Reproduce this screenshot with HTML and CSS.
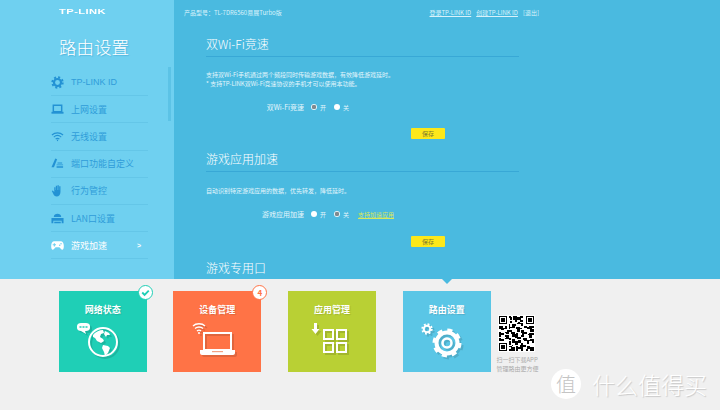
FILE: index.html
```html
<!DOCTYPE html>
<html lang="zh-CN">
<head>
    <meta charset="UTF-8">
    <title>路由设置</title>
    <link rel="stylesheet" href="styles.css">
</head>
<body>
<svg class="defs" width="0" height="0">
    <symbol id="gear" viewBox="0 0 24 24">
        <circle cx="12" cy="12" r="6.5" fill="none" stroke="currentColor" stroke-width="4"/>
        <circle cx="12" cy="12" r="9.6" fill="none" stroke="currentColor" stroke-width="3.6" stroke-dasharray="3.77 3.77"/>
    </symbol>
</svg>
<div id="top">
    <div id="side">
        <div class="logo">TP-LINK</div>
        <h1>路由设置</h1>
        <ul class="menu">
            <li>
                <svg viewBox="0 0 14 14"><use href="#gear"/></svg>
                <span class="latin">TP-LINK ID</span>
            </li>
            <li>
                <svg viewBox="0 0 14 14"><path d="M2.500 2.500h9v7h-9z" fill="none" stroke="currentColor" stroke-width="1.600"/><path d="M.500 9.500h13v2H.500z" fill="currentColor"/></svg>
                <span>上网设置</span>
            </li>
            <li>
                <svg viewBox="0 0 14 14" fill="none" stroke="currentColor" stroke-width="1.200"><path d="M1 5.400c3.400-3 8.600-3 12 0"/><path d="M3 7.600c2.300-2 5.700-2 8 0"/><path d="M5 9.700c1.200-.9 2.800-.9 4 0"/><path d="M6.400 11.200h1.200" stroke-width="1.500"/></svg>
                <span>无线设置</span>
            </li>
            <li>
                <svg viewBox="0 0 14 14" fill="currentColor"><path d="M4.600 1.500l2 1-3.400 8.500H.500z"/><path d="M6 8h7v1H6zM6 10h7v1.500H6zM7 6h5v1H7z"/></svg>
                <span>端口功能自定义</span>
            </li>
            <li>
                <svg viewBox="0 0 14 14" fill="currentColor"><path d="M3.500 3.500h1.300v3h.4V1.800h1.400v4.700h.4V1.300h1.400v5.200h.4V2.300h1.400v6.400c0 3-1.700 4.800-4 4.800-2 0-3-1.200-3.800-3L.900 7.500l1-.6 1.600 1.700z"/></svg>
                <span>行为管控</span>
            </li>
            <li>
                <svg viewBox="0 0 14 14" fill="currentColor"><path d="M3 5.500C3 3 5 2 7 2s4 1 4 3.500zM.500 6.500h13V12h-2V9.500h-9V12h-2zM3.500 10.500h7V12h-7z"/></svg>
                <span>LAN口设置</span>
            </li>
            <li class="active">
                <svg viewBox="0 0 14 14" fill="currentColor"><path d="M3.500 2.500h7c2 0 3.300 2 3.300 5 0 2.300-.5 4-1.800 4-1.500 0-2-2.500-3.500-2.500h-3c-1.500 0-2 2.500-3.500 2.500C.700 11.500.200 9.800.200 7.500c0-3 1.300-5 3.300-5z"/><path d="M3 4.500h1.200v1.200h1.200v1.100H4.200V8H3V6.800H1.800V5.700H3z" fill="#6fd0f0"/><circle cx="10.800" cy="5" r=".8" fill="#6fd0f0"/><circle cx="9.400" cy="6.800" r=".8" fill="#6fd0f0"/></svg>
                <span>游戏加速</span>
                <b class="arrow">&gt;</b>
            </li>
        </ul>
        <div class="scroll"></div>
    </div>
    <div id="main">
        <div class="head">
            <span>产品型号：TL-7DR6560易展Turbo版</span>
            <span class="links"><a>登录TP-LINK ID</a><a>创建TP-LINK ID</a><a class="plain">[退出]</a></span>
        </div>
        <h2>双Wi-Fi竞速</h2>
        <p class="desc">支持双Wi-Fi手机通过两个频段同时传输游戏数据，有效降低游戏延时。<br>* 支持TP-LINK双Wi-Fi竞速协议的手机才可以使用本功能。</p>
        <div class="row">
            <label>双Wi-Fi竞速</label>
            <i class="radio on"></i><span>开</span>
            <i class="radio"></i><span>关</span>
        </div>
        <div class="save"><button>保存</button></div>
        <h2>游戏应用加速</h2>
        <p class="desc one">自动识别特定游戏应用的数据，优先转发，降低延时。</p>
        <div class="row">
            <label>游戏应用加速</label>
            <i class="radio"></i><span>开</span>
            <i class="radio on"></i><span>关</span>
            <a class="yellow">支持加速应用</a>
        </div>
        <div class="save two"><button>保存</button></div>
        <h2 class="last">游戏专用口</h2>
    </div>
</div>
<div id="bottom">
    <div class="pointer"></div>
    <div class="tile green">
        <div class="name">网络状态</div>
        <svg class="art" viewBox="0 0 88 56">
            <circle cx="44" cy="26" r="14" fill="none" stroke="#fff" stroke-width="2"/>
            <path d="M34 19c2-3 6-5 10-5l1 3-3 1-1 3 3 2 1 2-3 2-4-2-2-3-2-1zM44 29l5 1 2 2-2 5-3 3-1-4-2-4zM46 15l4 2 1 2-3 0-1 2-2-3z" fill="#fff"/>
            <path d="M18 10c0-2 2-3 4-3h5c2 0 4 1 4 3v2c0 2-2 3-4 3h-1l1 3-5-3c-2 0-4-1-4-3z" fill="#fff"/>
            <path d="M20.500 11h2M23.500 11h2M26.500 11h2" stroke="#1fcfb6" stroke-width="1.600"/>
        </svg>
        <div class="badge teal"><svg viewBox="0 0 14 14"><path d="M3.500 7l2.500 2.500L10.500 5" fill="none" stroke="#1fcfb6" stroke-width="2"/></svg></div>
    </div>
    <div class="tile orange">
        <div class="name">设备管理</div>
        <svg class="art" viewBox="0 0 88 56">
            <path d="M31 17h27v17H31z" fill="none" stroke="#fff" stroke-width="2"/>
            <path d="M27 34h35v3c0 1-1 2-2 2H29c-1 0-2-1-2-2z" fill="#fff"/>
            <path d="M39 35h11v1.200H39z" fill="#f3a284"/>
            <g fill="none" stroke="#fff" stroke-width="1.300"><path d="M20 10c3-3 9-3 12 0"/><path d="M22 12.500c2-2 6-2 8 0"/><path d="M24 15c1-1 3-1 4 0"/></g>
            <circle cx="26" cy="17" r="1" fill="#fff"/>
        </svg>
        <div class="badge red">4</div>
    </div>
    <div class="tile lime">
        <div class="name">应用管理</div>
        <svg class="art" viewBox="0 0 88 56">
            <path d="M26 7h3v6h2.500l-4 5-4-5H26z" fill="#fff"/>
            <g fill="none" stroke="#fff" stroke-width="2"><path d="M36 14h9v9h-9zM49 14h9v9h-9zM36 27h9v9h-9zM49 27h9v9h-9z"/></g>
        </svg>
    </div>
    <div class="tile blue">
        <div class="name">路由设置</div>
        <svg class="art" viewBox="0 0 88 56" color="#fff">
            <use href="#gear" x="18" y="7" width="12" height="12"/>
            <g fill="none" stroke="#fff">
                <circle cx="44" cy="27" r="10.500" stroke-width="4"/>
                <circle cx="44" cy="27" r="13" stroke-width="3" stroke-dasharray="5.100 5.100"/>
                <circle cx="44" cy="27" r="4.500" stroke-width="2.500"/>
            </g>
        </svg>
    </div>
    <div class="app">
        <div class="qr">
            <svg viewBox="0 0 29 29" shape-rendering="crispEdges">
                <path d="M0 0h7v7H0zM1 1v5h5V1zM2 2h3v3H2zM22 0h7v7h-7zM23 1v5h5V1zM24 2h3v3h-3zM0 22h7v7H0zM1 23v5h5v-5zM2 24h3v3H2z" fill-rule="evenodd"/>
                <path d="M8 0h2v1h1v2H9V2H8zM12 0h3v1h2V0h3v2h-2v1h2v2h-3V3h-2v2h-2V3h-1V1zM9 4h2v2H9zM16 5h1v1h3v2h-2V7h-3V6h1zM8 7h1v2h2v1H9v1H8zM11 7h3v1h-1v2h-2zM21 8h2v1h2V8h4v2h-2v1h2v2h-3v-2h-3v-1h-2zM0 8h3v2h2V8h2v3H4v1H2v-1H0zM14 9h3v1h2v1h-2v2h-2v-2h-1zM7 12h4v1h2v2h-3v-2H8v2H6v-1H5v-1h2zM18 12h3v1h2v2h-2v2h-3v-1h1v-2h-1zM0 13h2v1h2v2H2v1H0zM25 14h4v2h-2v2h-2v-2h-1v-1h1zM11 15h3v-1h2v3h2v2h-3v-1h-2v-1h-2zM5 16h3v2h2v2H8v-1H5v-1h1v-1H5zM0 18h2v1h2v2H0zM20 18h3v2h3v-1h3v3h-2v-1h-2v2h-2v-2h-2v-1h-1zM11 19h2v2h3v-1h2v2h-2v2h-3v-2h-2zM8 21h2v3H8zM18 22h2v2h2v2h-2v3h-2v-2h-2v-1h1v-2h1zM8 25h3v1h2v3H8v-2h2v-1H8zM14 25h2v4h-2zM23 25h3v1h3v3h-3v-2h-2v2h-2v-2h1zM11 24h1v1h-1z"/>
            </svg>
        </div>
        <p>扫一扫下载APP<br>管理路由更方便</p>
    </div>
    <div class="mark">
        <span class="seal">值</span>
        <span>什么值得买</span>
    </div>
</div>
</body>
</html>
```

FILE: styles.css
```css
* {
    margin: 0;
    padding: 0;
    box-sizing: border-box;
}

html, body {
    width: 720px;
    height: 410px;
    overflow: hidden;
}

body {
    font-family: "Noto Sans CJK SC", "Liberation Sans", sans-serif;
    background: #f0f0f0;
}

.defs {
    position: absolute;
}

#top {
    display: flex;
    height: 279px;
    overflow: hidden;
}

/* left menu */
#side {
    width: 174px;
    background: #6fd0f0;
    padding: 6px 26px 0 51px;
    position: relative;
}

.logo {
    font-family: "Liberation Sans", sans-serif;
    font-size: 8px;
    font-weight: bold;
    line-height: 11px;
    color: #fff;
    padding-left: 8px;
    letter-spacing: .3px;
    transform: scaleX(1.4);
    transform-origin: 8px 0;
}

h1 {
    font-size: 17.5px;
    font-weight: 300;
    line-height: 26px;
    color: #fff;
    padding-left: 8px;
    margin-top: 17px;
    text-shadow: 1px 1px 1px rgba(40, 140, 190, .4);
}

.menu {
    list-style: none;
    margin-top: 9px;
}

.menu li {
    display: flex;
    align-items: center;
    height: 27.2px;
    border-bottom: 1px solid #64c6e8;
    font-size: 9px;
    color: #2f9dd9;
}

.menu svg {
    width: 13px;
    height: 13px;
    margin-right: 7px;
    color: #2392d4;
}

.menu .active {
    color: #fff;
    position: relative;
}

.menu .active svg {
    color: #fff;
}

.latin {
    font-family: "Liberation Sans", sans-serif;
}

.arrow {
    font-family: "Liberation Sans", sans-serif;
    font-size: 7px;
    margin-left: auto;
    margin-right: 7px;
}

.scroll {
    position: absolute;
    left: 168px;
    top: 67px;
    width: 3px;
    height: 54px;
    background: #5cc3e6;
}

/* right content */
#main {
    flex: 1;
    background: #4abae0;
    color: #e4f6fc;
    padding-right: 201px;
}

.head {
    display: flex;
    justify-content: space-between;
    height: 24px;
    margin-right: -20px;
    padding: 8px 0 0 10px;
    font-size: 6px;
    line-height: 9px;
    color: #d8f2fb;
}

.links a {
    margin-left: 5px;
    text-decoration: underline;
}

.links .plain {
    text-decoration: none;
}

h2 {
    margin-left: 32px;
    font-size: 12px;
    font-weight: 300;
    line-height: 16px;
    height: 33px;
    padding-top: 12px;
    color: #fff;
    border-bottom: 1px solid #38a8d6;
}

h2.last {
    border: 0;
    padding-top: 13px;
}

.desc {
    margin: 13px 0 0 32px;
    font-size: 6px;
    line-height: 9px;
}

.desc.one {
    margin-top: 14px;
}

.row {
    display: flex;
    align-items: center;
    height: 12px;
    margin-top: 13px;
    font-size: 7px;
}

.row label {
    width: 130px;
    text-align: right;
    margin-right: 7px;
}

.row span {
    font-size: 6px;
    margin-right: 8px;
    margin-left: 3px;
}

.radio {
    width: 6px;
    height: 6px;
    border-radius: 50%;
    background: #fff;
}

.radio.on {
    background: radial-gradient(circle, #7f8a8f 0 45%, #e8f4f8 60%);
}

.yellow {
    font-size: 6px;
    color: #d9e85a;
    text-decoration: underline;
    margin-left: 1px;
}

.save {
    display: flex;
    justify-content: flex-end;
    margin: 15px -126px 0 0;
    padding-right: 200px;
}

.save.two {
    margin-top: 16px;
}

button {
    width: 34px;
    height: 11px;
    border: 0;
    border-radius: 1px;
    background: #fde81a;
    color: #7c7a30;
    font-family: inherit;
    font-size: 6px;
    line-height: 11px;
}

/* lower tiles */
#bottom {
    position: relative;
    display: flex;
    height: 131px;
    padding: 12px 0 0 58.7px;
    gap: 26.7px;
}

.pointer {
    position: absolute;
    left: 442px;
    top: 0;
    border: 5px solid transparent;
    border-top-color: #4abae0;
    border-bottom: 0;
}

.tile {
    position: relative;
    width: 88px;
    height: 81px;
    color: #fff;
    text-align: center;
}

.name {
    font-size: 9px;
    font-weight: bold;
    line-height: 12px;
    padding-top: 13px;
    text-shadow: 1px 1px 1px rgba(0, 0, 0, .12);
}

.art {
    display: block;
    width: 88px;
    height: 56px;
    filter: drop-shadow(2px 2px 0 rgba(0, 0, 0, .12));
}

.green { background: #1fcfb6; }
.orange { background: #ff7346; }
.lime { background: #b9d034; }
.blue { background: #5ac6e6; }

.badge {
    position: absolute;
    right: -6px;
    top: -6px;
    width: 15px;
    height: 15px;
    border-radius: 50%;
    background: #fff;
    border: 1px solid;
    font-size: 8px;
    font-weight: bold;
    line-height: 13px;
}

.badge svg {
    display: block;
    width: 13px;
    height: 13px;
}

.teal { border-color: #1fcfb6; }
.red { border-color: #ff7346; color: #ff7346; }

.app {
    margin-left: -21px;
    padding-top: 24px;
    width: 50px;
    color: #aaa;
    font-size: 6px;
    line-height: 9px;
}

.qr {
    width: 37px;
    height: 37px;
    padding: 1px;
    margin-left: 2px;
    background: #fff;
}

.qr svg {
    display: block;
}

.app p {
    margin-top: 3px;
    white-space: nowrap;
}

.mark {
    position: absolute;
    left: 551px;
    top: 90px;
    display: flex;
    align-items: center;
    gap: 11px;
    font-size: 23px;
    line-height: 30px;
    font-weight: 300;
    color: #fff;
    text-shadow: 1px 1px 1px #c8c8c8;
}

.seal {
    width: 30px;
    height: 30px;
    border-radius: 50%;
    background: #fff;
    color: #c4c4c4;
    font-size: 20px;
    line-height: 29px;
    text-align: center;
    text-shadow: none;
}
```
